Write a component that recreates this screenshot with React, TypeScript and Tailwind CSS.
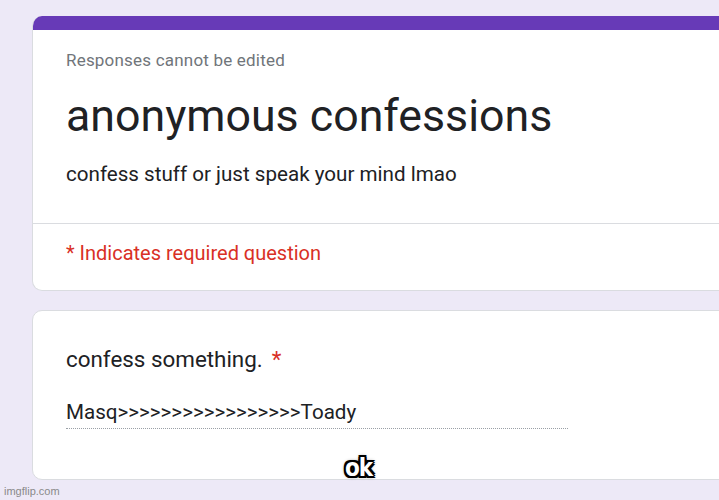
import React from "react";

export default function App() {
  const outline =
    "-2px -2px 0 #000, 2px -2px 0 #000, -2px 2px 0 #000, 2px 2px 0 #000, 0 2px 0 #000, 0 -2px 0 #000, 2px 0 0 #000, -2px 0 0 #000, 0 0 4px #000";
  return (
    <div className="relative w-[719px] h-[500px] overflow-hidden bg-[#ede9f7] font-['Roboto',sans-serif]">
      <div className="pt-[16px] pl-[32px] flex flex-col gap-[19px]">
        <div className="w-[720px] rounded-l-[10px] bg-white border border-[#dadce0] border-t-0 overflow-hidden">
          <div className="h-[14px] bg-[#673ab7]" />
          <div className="pl-[33px] pt-[20px] pb-[36px]">
            <div className="text-[17px] leading-[20px] text-[#70757a] tracking-[0.2px]">
              Responses cannot be edited
            </div>
            <div className="mt-[20px] text-[44.7px] leading-[52px] text-[#202124]">
              anonymous confessions
            </div>
            <div className="mt-[19px] text-[20.6px] leading-[26px] text-[#202124]">
              confess stuff or just speak your mind lmao
            </div>
          </div>
          <div className="h-[1px] bg-[#dadce0]" />
          <div className="pl-[33px] pt-[16px] pb-[24px] text-[20px] leading-[26px] text-[#d93025]">
            * Indicates required question
          </div>
        </div>
        <div className="w-[720px] h-[170px] rounded-l-[10px] bg-white border border-[#dadce0]">
          <div className="pl-[33px] pt-[34px]">
            <div className="text-[22.4px] leading-[28px] text-[#202124]">
              confess something.
              <span className="text-[#d93025] ml-[9px]">*</span>
            </div>
            <div className="mt-[27px] w-[502px] pb-[4px] border-b border-dotted border-[#9aa0a6] text-[20.6px] leading-[24px] text-[#202124]">
              Masq&gt;&gt;&gt;&gt;&gt;&gt;&gt;&gt;&gt;&gt;&gt;&gt;&gt;&gt;&gt;&gt;&gt;Toady
            </div>
          </div>
        </div>
      </div>
      <div
        className="absolute left-[345px] top-[454px] text-[24px] leading-[28px] font-bold text-white font-['DejaVu_Sans_Condensed','DejaVu_Sans',sans-serif] tracking-[-1px]"
        style={{ textShadow: outline }}
      >
        ok
      </div>
      <div className="absolute left-[4px] top-[484px] text-[11px] leading-[14px] text-[#8a8a8a] font-['Liberation_Sans',sans-serif]">
        imgflip.com
      </div>
    </div>
  );
}
